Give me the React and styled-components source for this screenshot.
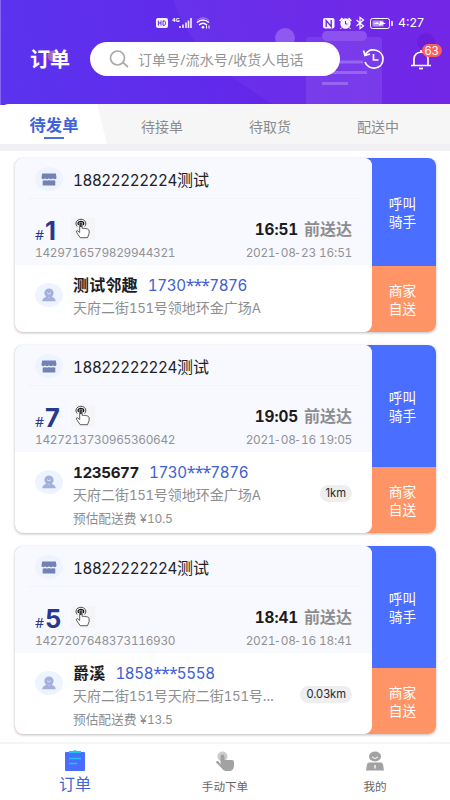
import React from 'react';
import styled, { createGlobalStyle } from 'styled-components';

const GlobalStyle = createGlobalStyle`
  * { box-sizing: border-box; }
  body {
    margin: 0;
    background: #fff;
    font-family: 'Noto Sans', 'Noto Sans CJK SC', sans-serif;
  }
`;

const Screen = styled.div`
  width: 450px;
  height: 800px;
  overflow: hidden;
  display: flex;
  flex-direction: column;
  background: #fff;
`;

const NumRun = styled.span`
  font-family: Inter, sans-serif;
  font-size: 0.95em;
  font-feature-settings: 'tnum';
  letter-spacing: -0.026em;
`;

const SymbolRun = styled.span`
  font-family: 'Noto Sans', sans-serif;
  letter-spacing: ${p => (p.$dash ? '0.12em' : '-0.06em')};
`;

const Header = styled.header`
  position: relative;
  height: 105px;
  flex: none;
  background: linear-gradient(75deg, #5b34ef 0%, #612aeb 45%, #6a20e6 75%, #721be4 100%);
`;

const Backdrop = styled.svg`
  position: absolute;
  inset: 0;
`;

const HeaderContent = styled.div`
  position: relative;
  display: flex;
  flex-direction: column;
`;

const StatusBar = styled.div`
  height: 42px;
  padding: 4px 0 0 156px;
  display: flex;
  align-items: center;
  color: #fff;
  svg { flex: none; }
`;

const Clock = styled.span`
  margin-left: 4px;
  font: 400 12.3px/16px Inter, sans-serif;
`;

const HeaderRow = styled.div`
  height: 34px;
  display: flex;
  align-items: center;
  padding-left: 30px;
`;

const Title = styled.h1`
  margin: 0;
  width: 60px;
  color: #fff;
  font-size: 20px;
  line-height: 34px;
  font-weight: 700;
  padding-top: 2px;
`;

const Search = styled.div`
  width: 250px;
  height: 34px;
  border-radius: 17px;
  background: #fff;
  display: flex;
  align-items: center;
  gap: 9px;
  padding-left: 19px;
  color: #959595;
  font-size: 14px;
  letter-spacing: 0.1px;
  white-space: nowrap;
`;

const HistoryIcon = styled.svg`
  margin-left: 22px;
`;

const Bell = styled.div`
  position: relative;
  width: 22px;
  height: 22px;
  margin-left: 25px;
`;

const Badge = styled.span`
  position: absolute;
  left: 11.5px;
  top: -4px;
  width: 20px;
  height: 13px;
  border-radius: 7px;
  background: #fb5d5f;
  color: #fff;
  text-align: center;
  font-size: 11.5px;
  font-family: Inter, sans-serif;
  line-height: 14px;
`;

const Tabs = styled.nav`
  position: relative;
  height: 40px;
  margin-top: -1px;
  flex: none;
  display: flex;
  background: #f6f6f6;
  border-radius: 9px 0 0 0;
  overflow: hidden;
`;

const TabShape = styled.svg`
  position: absolute;
  left: 0;
  top: 0;
`;

const Tab = styled.div`
  position: relative;
  width: 108px;
  display: flex;
  flex-direction: column;
  align-items: center;
  padding-top: ${p => (p.$active ? 9 : 11)}px;
  color: ${p => (p.$active ? '#4064d5' : '#8c8c8c')};
  font-size: ${p => (p.$active ? 16.3 : 14)}px;
  font-weight: ${p => (p.$active ? 700 : 400)};
  line-height: 24px;
`;

const TabList = styled.div`
  display: flex;
`;

const Underline = styled.span`
  width: 20px;
  height: 2px;
  background: #4a70dc;
`;

const Strip = styled.div`
  height: 7px;
  flex: none;
  background: #f0f0f5;
`;

const List = styled.main`
  flex: 1;
  min-height: 0;
  padding: 7px 14px 0 15px;
  display: flex;
  flex-direction: column;
  gap: 13px;
`;

const Card = styled.article`
  flex: none;
  height: ${p => p.$height}px;
  display: flex;
  border-radius: 8px;
  background: linear-gradient(#4a6eff calc(100% - 66px), #ff9466 calc(100% - 66px));
  box-shadow: 0 1px 3px rgba(0, 0, 0, 0.27);
`;

const CardBody = styled.div`
  width: 357px;
  display: flex;
  flex-direction: column;
  border-radius: 8px;
  background: #fff;
  overflow: hidden;
`;

const CardTop = styled.section`
  height: 107px;
  flex: none;
  background: #f8f9fe;
`;

const StoreRow = styled.div`
  height: 41px;
  margin: 0 11px 0 14px;
  padding: 2px 0 0 6px;
  display: flex;
  align-items: center;
  gap: 10px;
  border-bottom: 1px dotted #eeeff5;
  color: #202124;
  font-size: 16px;
`;

const Avatar = styled.span`
  width: 28px;
  height: 24px;
  flex: none;
  border-radius: 50%;
  background: #edf3ff;
  display: flex;
  align-items: center;
  justify-content: center;
`;

const Line = styled.div`
  display: flex;
  justify-content: space-between;
  padding: 0 20px;
  height: ${p => p.$h}px;
  line-height: ${p => p.$h}px;
`;

const Seq = styled.div`
  display: flex;
  align-items: baseline;
  padding-top: 10px;
  color: #28388f;
  font-family: Inter, sans-serif;
  font-size: 14px;
  font-weight: 500;
`;

const Hash = styled.span`
  width: 9px;
  font-family: 'Noto Sans', sans-serif;
  font-weight: 400;
`;

const SeqNumber = styled.b`
  font-size: 25.5px;
  line-height: 43px;
  width: 26px;
  margin-left: 1px;
`;

const TouchIcon = styled.svg`
  flex: none;
  align-self: flex-start;
  margin: 9px 0 0;
`;

const Deadline = styled.div`
  padding-top: 9px;
  font-size: 16px;
  font-weight: 700;
  color: #8d8d8f;
`;

const DeadlineTime = styled.span`
  margin-right: 6px;
  color: #1c1c1e;
  font-family: Inter, sans-serif;
  font-size: 15.3px;
  letter-spacing: -0.1px;
  font-feature-settings: 'tnum';
`;

const Meta = styled.span`
  padding-top: 1px;
  color: #929295;
  font-size: 12.5px;
`;

const Customer = styled.section`
  display: flex;
  gap: 10px;
  padding: 8px 20px 0 20px;
`;

const CustomerAvatar = styled(Avatar)`
  margin-top: 10px;
`;

const CustomerInfo = styled.div`
  flex: 1;
  min-width: 0;
`;

const NameLine = styled.div`
  display: flex;
  gap: 10px;
  height: 23px;
  line-height: 24px;
  font-size: 16px;
  color: #3e60d0;
`;

const Name = styled.b`
  color: #1d1d1f;
  letter-spacing: 0.2px;
`;

const Phone = styled.span`
  font-size: 16px;
`;

const AddressLine = styled.div`
  height: 24px;
  display: flex;
  align-items: center;
  justify-content: space-between;
  color: #8e8e90;
  font-size: 14px;
  line-height: 24px;
  white-space: nowrap;
`;

const Distance = styled.span`
  height: 17px;
  margin-top: -4px;
  padding: 0 6px;
  border-radius: 9px;
  background: #eeeeef;
  color: #29292b;
  font-family: Inter, sans-serif;
  font-size: 11.2px;
  line-height: 17px;
`;

const Fee = styled.div`
  color: #8e8e90;
  font-size: 12.7px;
  line-height: 22px;
`;

const Actions = styled.div`
  width: 64px;
  display: flex;
  flex-direction: column;
  color: #fff;
  font-size: 13.7px;
  line-height: 18px;
`;

const Action = styled.div`
  flex: ${p => (p.$fixed ? '0 0 66px' : '1')};
  display: flex;
  align-items: center;
  justify-content: center;
  padding: 1px 18px 0 15px;
  text-align: center;
`;

const BottomNav = styled.nav`
  height: 58px;
  flex: none;
  display: flex;
  background: #fff;
  border-top: 2px solid #f5f5f6;
`;

const NavItem = styled.div`
  width: 150px;
  display: flex;
  flex-direction: column;
  align-items: center;
  padding-top: 6px;
  color: ${p => (p.$active ? '#4064d5' : '#666')};
  font-size: ${p => (p.$active ? 16 : 11.6)}px;
  line-height: ${p => (p.$active ? 24 : 18)}px;
`;

const NavSvg = styled.svg`
  flex: none;
  margin-bottom: ${p => (p.$active ? 0 : 6)}px;
`;

const Mixed = ({ children }) =>
  children.split(/([0-9.A-Z]+|[*]+|-)/).filter(Boolean).map((run, i) => {
    if (/^[0-9.A-Z]/.test(run)) return <NumRun key={i}>{run}</NumRun>;
    if (/^[*-]/.test(run)) return <SymbolRun key={i} $dash={run === '-'}>{run}</SymbolRun>;
    return run;
  });

const StatusIcons = () => (
  <>
    <svg width="12" height="10" viewBox="0 0 12 10">
      <rect width="12" height="10" rx="2" fill="#f7f0ff" />
      <path d="M2.4 2.6v5M5 2.6v5M2.4 5H5M7 2.9v4.4h1c2 0 2-4.4 0-4.4z" fill="none" stroke="#5c2dce" />
    </svg>
    <svg width="56" height="14" viewBox="0 0 56 14">
      <text x="4" y="6" fontSize="6" fontWeight="700" fill="#fff" fontFamily="Noto Sans">4G</text>
      <path d="M12 12V10M15 12V8.500M18 12V6.500M20.500 12V4.500M23 12V2" stroke="#eee3ff" strokeWidth="1.7" fill="none" />
      <path d="M29 6.500q6-5 12 0M31 9q4-3.500 8 0" stroke="#fff" strokeWidth="1.4" fill="none" />
      <path d="M29 4.300q6-5 12 0" stroke="#a783f8" fill="none" />
      <circle cx="35" cy="11.300" r="1.300" fill="#fff" />
      <path d="M38.500 9.500v3M41 9.500v3" stroke="#fff" />
    </svg>
    <svg width="170" height="14" viewBox="0 0 170 14">
      <g transform="translate(99 2)">
        <rect width="11.500" height="10.500" rx="2" fill="#f7f0ff" />
        <path d="M3.200 9V2.500l5 6V2" fill="none" stroke="#6427da" strokeWidth="1.300" />
      </g>
      <g transform="translate(115 1)" fill="none" stroke="#fff">
        <circle cx="6.500" cy="6.500" r="4.400" fill="#f7f0ff" strokeWidth="1.500" />
        <path d="M.7 4 3.500 1.200M9.500 1.200 12.300 4" strokeWidth="1.700" />
        <path d="M2.700 10.500 1.500 12M10.300 10.500l1.200 1.500" />
        <path d="M6.500 4v3h2" stroke="#6427da" />
      </g>
      <path d="m132.500 4 7 6-3.500 2.500v-11l3.500 2.500-7 6" fill="none" stroke="#fff" strokeWidth="1.200" />
      <rect x="146.500" y="2.500" width="19" height="10" rx="2" fill="none" stroke="#fff" />
      <rect x="148.500" y="4.500" width="11" height="6" fill="#b795f5" />
      <path d="m149 8 5-2v1.500h2L156 5l6 2.500-7 2V8z" fill="#fff" />
      <path d="M168 5v5" stroke="#fff" strokeWidth="1.500" />
    </svg>
  </>
);

const StoreIcon = () => (
  <svg width="16" height="13" viewBox="0 0 16 13" fill="#7381b3">
    <path d="M1.200.5h13.600l.7 4c0 1.800-2.400 2.200-3.500.8-1 1.300-3 1.300-4 0-1 1.300-3 1.300-4 0C2.900 6.700.5 6.300.5 4.500z" />
    <path d="M1.700 7.500c1 .2 1.700 0 2.300-.5 1.200.8 2.500.8 4 0 1.500.8 2.800.8 4 0 .6.5 1.300.7 2.300.5v5H1.700z" />
  </svg>
);

const PersonIcon = () => (
  <svg width="14" height="14" viewBox="0 0 14 14">
    <circle cx="7" cy="5" r="4.600" fill="#a3b0dc" />
    <path d="M.3 13.300q0-3.300 4.300-4.500l2.400 1 2.400-1q4.300 1.200 4.300 4.500z" fill="#a3b0dc" />
    <path d="M5 4.800q2 2.200 4 0" fill="none" stroke="#dfe7fb" strokeWidth=".9" />
  </svg>
);

const Touch = () => (
  <TouchIcon width="24" height="22" viewBox="0 0 24 22">
    <rect width="24" height="22" fill="#f5f5f7" />
    <path d="M6.200 8.500C3.500 5.500 5.500 1.300 9.900 1.300s6.400 4.200 3.700 7.200" fill="none" stroke="#333" strokeWidth=".9" />
    <path d="M7.500 7Q6 3.500 9.900 3.300 13.800 3.500 12.300 7" fill="none" stroke="#111" strokeWidth="1.300" />
    <path d="M8.700 14.500V5.300q0-1.200 1.200-1.200t1.200 1.200v5c3.500.2 7 .2 7 2.700v2.500l-1.600 4.200H9.200L5.500 14.200q-.6-1.400.8-1.500z" fill="#fff" stroke="#333" strokeWidth=".8" />
    <path d="M9.900 5v4" fill="none" stroke="#111" strokeWidth="1.400" />
  </TouchIcon>
);

const orders = [
  { seq: 1, id: '1429716579829944321', time: '16:51', date: '2021-08-23 16:51', name: '测试邻趣', phone: '1730***7876', address: '天府二街151号领地环金广场A', height: 174 },
  { seq: 7, id: '1427213730965360642', time: '19:05', date: '2021-08-16 19:05', name: '1235677', phone: '1730***7876', address: '天府二街151号领地环金广场A', distance: '1km', fee: '预估配送费 ¥10.5', height: 188 },
  { seq: 5, id: '1427207648373116930', time: '18:41', date: '2021-08-16 18:41', name: '爵溪', phone: '1858***5558', address: '天府二街151号天府二街151号…', distance: '0.03km', fee: '预估配送费 ¥13.5', height: 188 },
];

const OrderCard = ({ order }) => (
  <Card $height={order.height}>
    <CardBody>
      <CardTop>
        <StoreRow><Avatar><StoreIcon /></Avatar><span><Mixed>18822222224测试</Mixed></span></StoreRow>
        <Line $h={43}>
          <Seq><Hash>#</Hash><SeqNumber>{order.seq}</SeqNumber><Touch /></Seq>
          <Deadline><DeadlineTime>{order.time}</DeadlineTime>前送达</Deadline>
        </Line>
        <Line $h={20}>
          <Meta><Mixed>{order.id}</Mixed></Meta>
          <Meta><Mixed>{order.date}</Mixed></Meta>
        </Line>
      </CardTop>
      <Customer>
        <CustomerAvatar><PersonIcon /></CustomerAvatar>
        <CustomerInfo>
          <NameLine><Name><Mixed>{order.name}</Mixed></Name><Phone><Mixed>{order.phone}</Mixed></Phone></NameLine>
          <AddressLine><span><Mixed>{order.address}</Mixed></span>{order.distance && <Distance>{order.distance}</Distance>}</AddressLine>
          {order.fee && <Fee><Mixed>{order.fee}</Mixed></Fee>}
        </CustomerInfo>
      </Customer>
    </CardBody>
    <Actions>
      <Action>呼叫骑手</Action>
      <Action $fixed>商家自送</Action>
    </Actions>
  </Card>
);

export default function App() {
  return (
    <Screen>
      <GlobalStyle />
      <Header>
        <Backdrop width="450" height="105" viewBox="0 0 450 105">
          <path d="M173 0q18 50 60 78t42 27h175V0z" fill="#7a43ee" opacity=".28" />
          <circle cx="285" cy="38" r="10" fill="#8f58ee" />
          <circle cx="426" cy="42" r="9" fill="#6117d0" opacity=".5" />
          <rect x="306" y="37" width="76" height="68" rx="3" fill="#8048ed" opacity=".6" />
          <rect x="322" y="31" width="45" height="10" rx="5" fill="#8b52ed" />
          <path d="M322 62h41M322 72.500h45M322 83.500h26" stroke="#9666f1" strokeWidth="3" />
          <circle cx="53" cy="56" r="5.500" fill="#a66ab6" />
          <path d="M.5 0v105" stroke="#8665f4" />
        </Backdrop>
        <HeaderContent>
          <StatusBar><StatusIcons /><Clock>4:27</Clock></StatusBar>
          <HeaderRow>
            <Title>订单</Title>
            <Search>
              <svg width="20" height="18" viewBox="0 0 20 18" fill="none" stroke="#aaa" strokeWidth="1.700"><circle cx="8.500" cy="8" r="7" /><path d="m14 12.500 5 4.500" /></svg>
              订单号/流水号/收货人电话
            </Search>
            <HistoryIcon width="23" height="22" viewBox="0 0 23 22" fill="none" stroke="#fff" strokeWidth="1.700">
              <path d="M3 7C8-2 21 2 21 11c0 11-15 12-18 3M1.500 2.500 3 7.500l5-1.500M11.500 6v6h5" />
            </HistoryIcon>
            <Bell>
              <svg width="22" height="22" viewBox="0 0 22 22" fill="none" stroke="#fff" strokeWidth="1.700">
                <path d="M1 17.500h20M4 17V11c0-9 14-9 14 0v6M11 4V2" /><path d="M9 20.500h4" />
              </svg>
              <Badge>63</Badge>
            </Bell>
          </HeaderRow>
        </HeaderContent>
      </Header>
      <Tabs>
        <TabShape width="110" height="40"><path d="M0 0H97L107 40H0z" fill="#fff" /></TabShape>
        <TabList>
          <Tab $active>待发单<Underline /></Tab>
          <Tab>待接单</Tab>
          <Tab>待取货</Tab>
          <Tab>配送中</Tab>
        </TabList>
      </Tabs>
      <Strip />
      <List>{orders.map(o => <OrderCard key={o.id} order={o} />)}</List>
      <BottomNav>
        <NavItem $active>
          <NavSvg $active width="20" height="22" viewBox="0 0 20 22">
            <rect y="2" width="20" height="19" rx="1" fill="#4a6cff" />
            <path d="M4 1h4l2-1 2 1h4v2H4z" fill="#20c3f4" />
            <path d="M4 8.500h12M4 13.500h8" stroke="#20c3f4" strokeWidth="1.500" />
          </NavSvg>
          订单
        </NavItem>
        <NavItem>
          <NavSvg width="20" height="22" viewBox="0 0 20 22">
            <circle cx="7.500" cy="6.500" r="5" fill="#ccc" />
            <path d="M5.500 15V6.500a2 2 0 0 1 4 0V10H17q2 0 2 2v3c0 4-2 6-5 6h-3c-2 0-3-1-4-2.500L1 12.500c0-2 2-2 3-.8z" fill="#a2a2a2" />
          </NavSvg>
          手动下单
        </NavItem>
        <NavItem>
          <NavSvg width="20" height="22" viewBox="0 0 20 22">
            <ellipse cx="10" cy="6.500" rx="6" ry="5" fill="#a2a2a2" />
            <path d="M7 7q3 3 6 0" fill="none" stroke="#fff" />
            <path d="M4 12.500h12q1.500 0 2 2l1 6H1l1-6q.5-2 2-2z" fill="#a2a2a2" />
            <path d="M10 15v3.500" stroke="#ddd" strokeWidth="2" />
          </NavSvg>
          我的
        </NavItem>
      </BottomNav>
    </Screen>
  );
}
